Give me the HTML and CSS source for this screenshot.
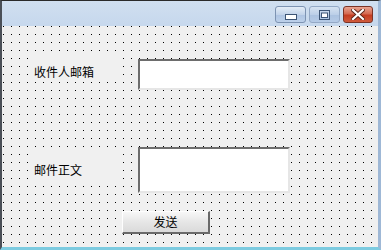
FILE: index.html
```html
<!DOCTYPE html>
<html lang="zh">
<head>
    <meta charset="UTF-8">
    <title>Form1</title>
    <link rel="stylesheet" href="styles.css">
</head>
<body>
    <div class="window">
        <div class="titlebar">
            <div class="caption-btn min-btn">
                <svg width="12" height="6" viewBox="0 0 12 6"><rect x="0.5" y="0.5" width="11" height="5" fill="#fff" stroke="#3d5575"/></svg>
            </div>
            <div class="caption-btn max-btn">
                <svg width="11" height="10" viewBox="0 0 11 10"><rect x="0.5" y="0.5" width="10" height="9" fill="none" stroke="#3d5575"/><rect x="2.5" y="3" width="6" height="4.5" fill="#fff" stroke="#3d5575"/></svg>
            </div>
            <div class="caption-btn close-btn">
                <svg width="14" height="11" viewBox="0 0 14 11">
                    <path d="M2 1 L12 10 M12 1 L2 10" stroke="#5a2418" stroke-width="4" stroke-linecap="square"/>
                    <path d="M2 1 L12 10 M12 1 L2 10" stroke="#fff" stroke-width="2.2" stroke-linecap="square"/>
                </svg>
            </div>
        </div>
        <div class="client">
            <div class="row row-mail">
                <div class="label">收件人邮箱</div>
                <div class="textbox tb-mail"></div>
            </div>
            <div class="row row-body">
                <div class="label label-body">邮件正文</div>
                <div class="textbox tb-body"></div>
            </div>
            <div class="send-btn">发送</div>
        </div>
    </div>
</body>
</html>
```

FILE: styles.css
```css
html, body {
    margin: 0;
    padding: 0;
    width: 381px;
    height: 250px;
    overflow: hidden;
    font-family: "Noto Sans CJK SC", "DejaVu Sans", sans-serif;
}
.window {
    box-sizing: border-box;
    width: 381px;
    height: 250px;
    display: flex;
    flex-direction: column;
    border-top: 1px solid #2a2a2a;
    border-left: 2px solid #4a4f57;
    border-right: 3px solid #9fb8d6;
    border-bottom: 3px solid #7ccbe0;
    background: linear-gradient(#d0dff0, #b2c9e6 30%, #a5bedf);
}
.titlebar {
    height: 25px;
    display: flex;
    justify-content: flex-end;
    padding: 5px 5px 0 0;
    box-sizing: border-box;
    gap: 3px;
}
.caption-btn {
    width: 31px;
    height: 17px;
    box-sizing: border-box;
    border: 1px solid #7d93b2;
    border-radius: 3px;
    display: flex;
    align-items: center;
    justify-content: center;
    background: linear-gradient(#e4edf7, #c3d4ea 50%, #aec4e2 51%, #bcd0ea);
}
.min-btn svg {
    margin-top: 5px;
}
.max-btn {
    width: 31px;
    background: linear-gradient(#d6e2f1, #bccfe8 50%, #abc2e0 51%, #b5cae6);
    border-color: #94a9c6;
}
.close-btn {
    width: 30px;
    border-color: #7b3326;
    background: linear-gradient(#e8a391, #d46a52 45%, #c43d22 55%, #cf5a3c);
}
.client {
    flex: 1;
    background-color: #f0f0f0;
    background-image: conic-gradient(at 1px 1px, transparent 75%, #000 0);
    background-size: 8px 8px;
    background-position: 1px 0;
    padding-left: 30px;
}
.row {
    display: flex;
    align-items: flex-start;
}
.row-mail {
    margin-top: 31px;
}
.row-body {
    margin-top: 57px;
}
.label {
    width: 88px;
    height: 24px;
    line-height: 24px;
    padding: 3px 0 0 2px;
    box-sizing: border-box;
    background: #f0f0f0;
    font-size: 12px;
    color: #000;
    margin-right: 18px;
}
.label-body {
    margin-top: 7px;
    height: 26px;
    padding-top: 4px;
}
.textbox {
    width: 152px;
    box-sizing: border-box;
    background: #fff;
    border-top: 2px solid #6d6d6d;
    border-left: 2px solid #6d6d6d;
    border-right: 2px solid #e6e6e6;
    border-bottom: 2px solid #e6e6e6;
}
.tb-mail {
    height: 31px;
    margin-top: 2px;
}
.tb-body {
    height: 46px;
}
.send-btn {
    margin-top: 18px;
    margin-left: 90px;
    width: 88px;
    height: 23px;
    box-sizing: border-box;
    border-top: 1px solid #fdfdfd;
    border-left: 1px solid #fdfdfd;
    border-right: 2px solid #696969;
    border-bottom: 2px solid #696969;
    background: linear-gradient(#f7f7f7, #e6e6e6 50%, #dadada);
    font-size: 12px;
    line-height: 20px;
    text-align: center;
    color: #000;
}
```
